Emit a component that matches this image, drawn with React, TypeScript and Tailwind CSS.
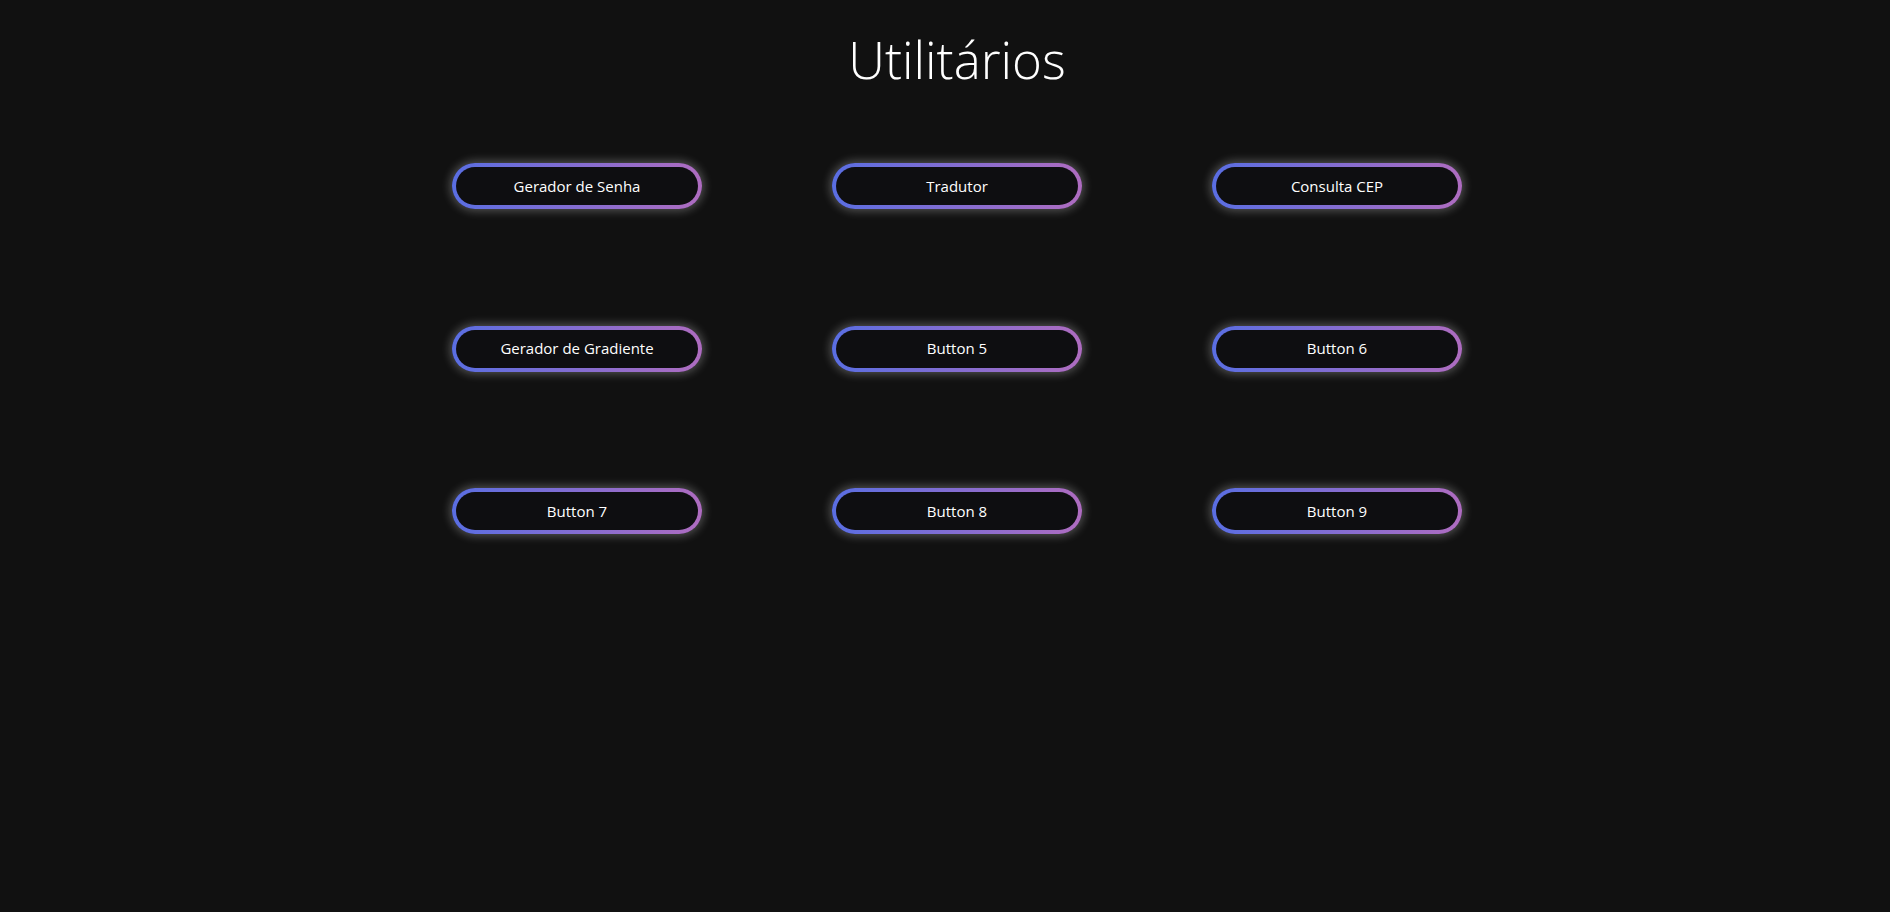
import React from "react";

const labels = [
  "Gerador de Senha",
  "Tradutor",
  "Consulta CEP",
  "Gerador de Gradiente",
  "Button 5",
  "Button 6",
  "Button 7",
  "Button 8",
  "Button 9",
];

export default function App() {
  return (
    <div
      className="min-h-[912px] w-full bg-[#111111] text-white"
      style={{ fontFamily: '"Open Sans", "Noto Sans", sans-serif' }}
    >
      <div className="flex flex-col items-center pl-[24px] pt-[34px]">
        <h1 className="text-[51px] font-light leading-[51px] text-white">Utilitários</h1>
        <div className="mt-[78px] grid grid-cols-[250px_250px_250px] gap-x-[130px] gap-y-[116.5px]">
          {labels.map((l) => (
            <button
              key={l}
              className="h-[46px] w-[250px] rounded-full bg-[linear-gradient(to_right,#5a6ee2,#ae6cc0)] p-[4px] shadow-[0_0_10px_2px_rgba(255,255,255,0.28)]"
            >
              <span className="flex h-full w-full items-center justify-center rounded-full bg-[#0e0e11] text-[15px] text-white">
                {l}
              </span>
            </button>
          ))}
        </div>
      </div>
    </div>
  );
}
